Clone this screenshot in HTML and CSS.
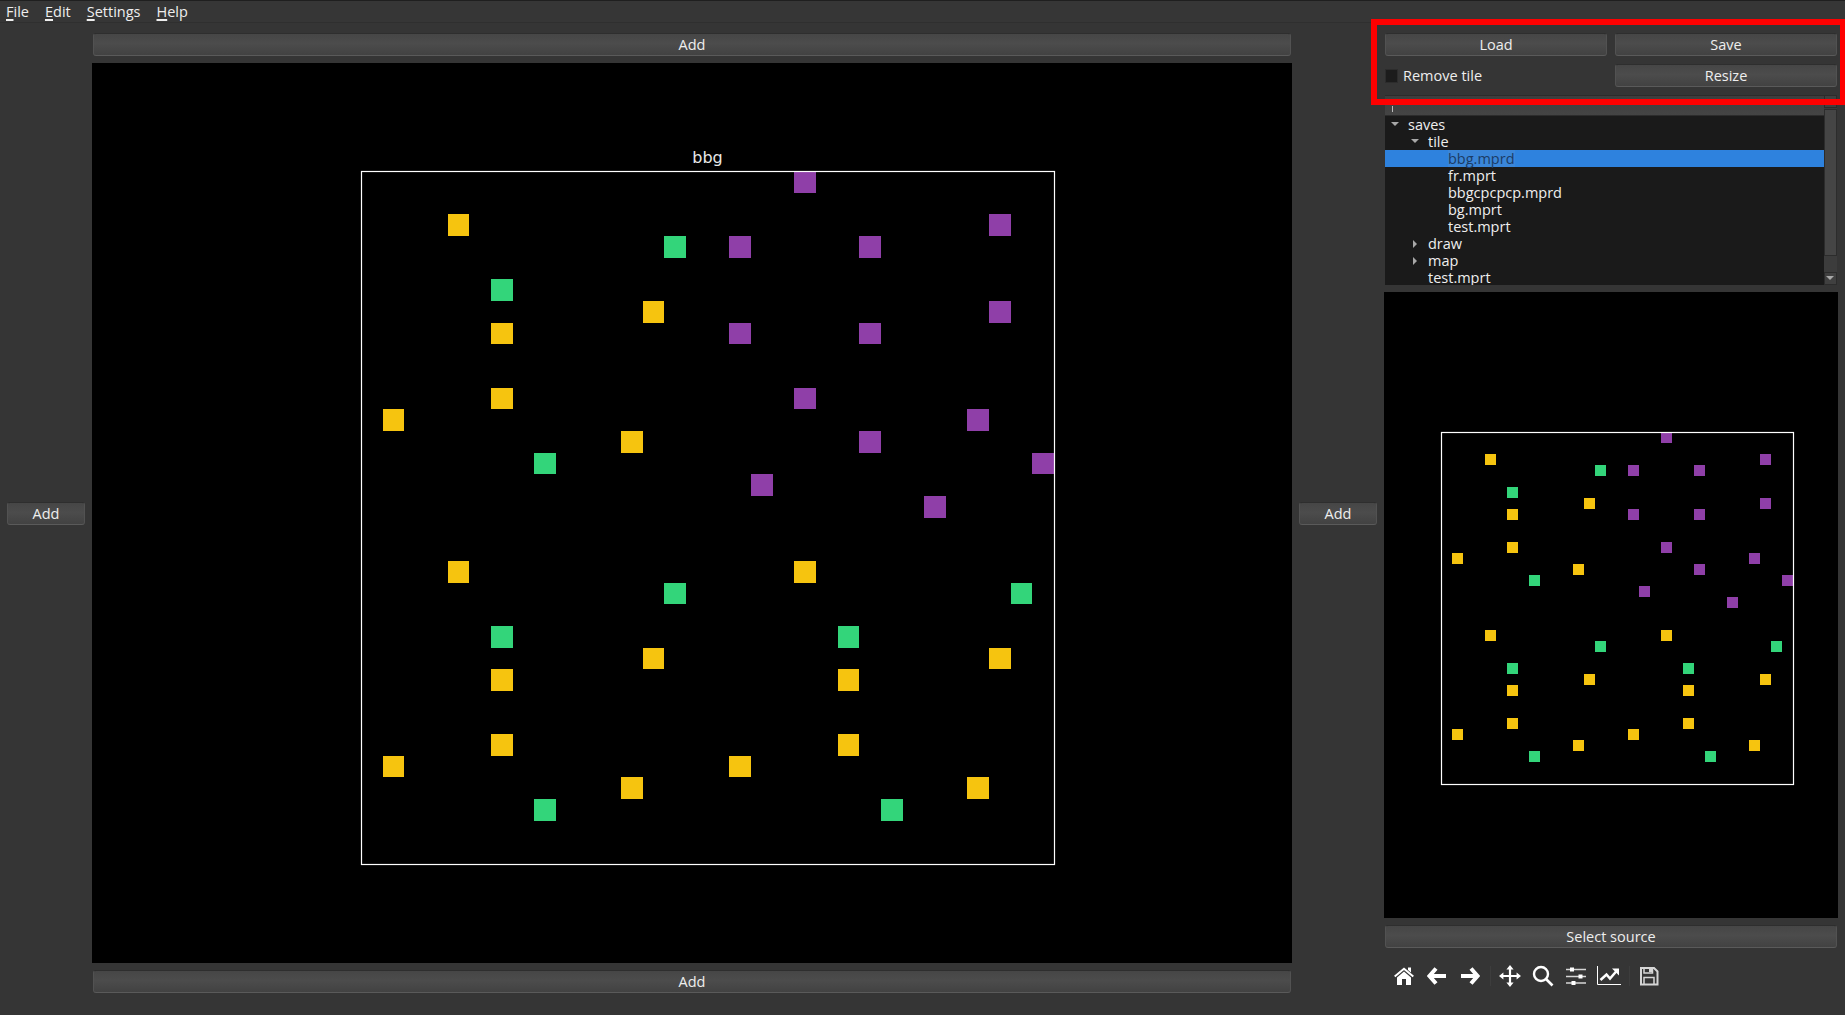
FILE: index.html
```html
<!DOCTYPE html>
<html lang="en">
<head>
  <meta charset="UTF-8">
  <title>Map editor</title>
  <link rel="stylesheet" href="styles.css">
</head>
<body>
  <div class="menubar">
    <span class="menu-item"><u>F</u>ile</span>
    <span class="menu-item"><u>E</u>dit</span>
    <span class="menu-item"><u>S</u>ettings</span>
    <span class="menu-item"><u>H</u>elp</span>
  </div>

  <div class="workspace">
    <button class="btn add-top">Add</button>
    <button class="btn add-left">Add</button>

    <!-- Main plot -->
    <svg class="canvas canvas-main" viewBox="0 0 1200 900">
      <defs>
        <g id="tiles" shape-rendering="crispEdges">
          <g class="tile-yellow">
            <rect x="4" y="2" width="1" height="1"/>
            <rect x="13" y="6" width="1" height="1"/>
            <rect x="6" y="7" width="1" height="1"/>
            <rect x="6" y="10" width="1" height="1"/>
            <rect x="1" y="11" width="1" height="1"/>
            <rect x="12" y="12" width="1" height="1"/>
            <rect x="4" y="18" width="1" height="1"/>
            <rect x="20" y="18" width="1" height="1"/>
            <rect x="13" y="22" width="1" height="1"/>
            <rect x="29" y="22" width="1" height="1"/>
            <rect x="6" y="23" width="1" height="1"/>
            <rect x="22" y="23" width="1" height="1"/>
            <rect x="6" y="26" width="1" height="1"/>
            <rect x="22" y="26" width="1" height="1"/>
            <rect x="1" y="27" width="1" height="1"/>
            <rect x="17" y="27" width="1" height="1"/>
            <rect x="12" y="28" width="1" height="1"/>
            <rect x="28" y="28" width="1" height="1"/>
          </g>
          <g class="tile-green">
            <rect x="14" y="3" width="1" height="1"/>
            <rect x="6" y="5" width="1" height="1"/>
            <rect x="8" y="13" width="1" height="1"/>
            <rect x="14" y="19" width="1" height="1"/>
            <rect x="30" y="19" width="1" height="1"/>
            <rect x="6" y="21" width="1" height="1"/>
            <rect x="22" y="21" width="1" height="1"/>
            <rect x="8" y="29" width="1" height="1"/>
            <rect x="24" y="29" width="1" height="1"/>
          </g>
          <g class="tile-purple">
            <rect x="20" y="0" width="1" height="1"/>
            <rect x="29" y="2" width="1" height="1"/>
            <rect x="17" y="3" width="1" height="1"/>
            <rect x="23" y="3" width="1" height="1"/>
            <rect x="29" y="6" width="1" height="1"/>
            <rect x="17" y="7" width="1" height="1"/>
            <rect x="23" y="7" width="1" height="1"/>
            <rect x="20" y="10" width="1" height="1"/>
            <rect x="28" y="11" width="1" height="1"/>
            <rect x="23" y="12" width="1" height="1"/>
            <rect x="31" y="13" width="1" height="1"/>
            <rect x="18" y="14" width="1" height="1"/>
            <rect x="26" y="15" width="1" height="1"/>
          </g>
        </g>
      </defs>
      <text class="plot-title" x="615.5" y="100">bbg</text>
      <use href="#tiles" transform="translate(269 108) scale(21.66)"/>
      <rect class="plot-frame" x="269.5" y="108.5" width="693" height="693"/>
    </svg>

    <button class="btn add-right">Add</button>
    <button class="btn add-bottom">Add</button>

    <div class="side-panel">
      <div class="controls">
        <button class="btn">Load</button>
        <button class="btn">Save</button>
        <label class="check"><span class="check-box"></span>Remove tile</label>
        <button class="btn">Resize</button>
      </div>

      <div class="tree">
        <div class="tree-main">
          <div class="tree-header"><span class="sort-mark"></span></div>
          <div class="tree-rows">
            <div class="row depth-0"><span class="caret caret-open"></span>saves</div>
            <div class="row depth-1"><span class="caret caret-open"></span>tile</div>
            <div class="row depth-2 selected"><span class="sel-name">bbg.mprd</span></div>
            <div class="row depth-2">fr.mprt</div>
            <div class="row depth-2">bbgcpcpcp.mprd</div>
            <div class="row depth-2">bg.mprt</div>
            <div class="row depth-2">test.mprt</div>
            <div class="row depth-1"><span class="caret caret-closed"></span>draw</div>
            <div class="row depth-1"><span class="caret caret-closed"></span>map</div>
            <div class="row depth-1">test.mprt</div>
          </div>
        </div>
        <div class="scrollbar">
          <div class="scroll-btn"></div>
          <div class="scroll-thumb"></div>
          <div class="scroll-groove"></div>
          <div class="scroll-btn"><span class="caret caret-open"></span></div>
        </div>
      </div>

      <!-- Preview plot -->
      <svg class="canvas canvas-preview" viewBox="0 0 454 626">
        <use href="#tiles" transform="translate(57 140) scale(11)"/>
        <rect class="plot-frame" x="57.5" y="140.5" width="352" height="352"/>
      </svg>

      <button class="btn select-source">Select source</button>

      <div class="toolbar">
        <span class="tool">
          <svg width="20" height="20" viewBox="0 0 20 20">
            <path class="ico-fill" d="M3 11.500 10 5.600l7 5.900V19h-5v-6H8v6H3z"/>
            <path class="ico-line" d="M.7 10.600 10 2.700l9.300 7.900" stroke-width="2"/>
            <path class="ico-fill" d="M14 1.500h3v5l-3-2.500z"/>
          </svg>
        </span>
        <span class="tool">
          <svg width="20" height="20" viewBox="0 0 20 20">
            <path class="ico-line" d="M9 2.500 2.500 10 9 17.500M3 10h16" stroke-width="4"/>
          </svg>
        </span>
        <span class="tool">
          <svg width="20" height="20" viewBox="0 0 20 20">
            <path class="ico-line" d="M11 2.500 17.500 10 11 17.500M17 10H1" stroke-width="4"/>
          </svg>
        </span>
        <span class="tool-sep"></span>
        <span class="tool">
          <svg width="22" height="22" viewBox="0 0 22 22">
            <path class="ico-line" d="M11 3v16M3 11h16" stroke-width="2.200"/>
            <path class="ico-fill" d="M11 0l3.600 4.400H7.400zM11 22l3.600-4.400H7.400zM0 11l4.400-3.600v7.200zM22 11l-4.400-3.600v7.200z"/>
          </svg>
        </span>
        <span class="tool">
          <svg width="22" height="22" viewBox="0 0 22 22">
            <circle class="ico-line" cx="9" cy="9" r="7" stroke-width="2.400"/>
            <path class="ico-line" d="M14 14l6.500 6.500" stroke-width="2.600"/>
          </svg>
        </span>
        <span class="tool">
          <svg width="20" height="20" viewBox="0 0 20 20">
            <path class="ico-dim" d="M0 3.500h20M0 10.500h20M0 17h20" stroke-width="1.500"/>
            <path class="ico-fill" d="M4 1.500h4v4H4zM12.500 8.500h4v4h-4zM5.500 15h4v4h-4z"/>
          </svg>
        </span>
        <span class="tool">
          <svg width="24" height="20" viewBox="0 0 24 20">
            <path class="ico-line" d="M.5 0v18.500H24" stroke-width="1"/>
            <path class="ico-line" d="M3.500 14l6-5.500 3.500 4 7-8" stroke-width="2.500"/>
            <path class="ico-fill" d="M15 2.500h7v7z"/>
          </svg>
        </span>
        <span class="tool-sep"></span>
        <span class="tool">
          <svg width="20" height="20" viewBox="0 0 20 20">
            <path class="ico-dim" d="M2 2h13l3.500 3.500V18.500H2z" stroke-width="2"/>
            <path class="ico-dim" d="M5 2v5h8.500V2M5 18.500v-7h10v7" stroke-width="1.500"/>
            <path class="ico-soft" d="M10 3h3v3h-3z"/>
          </svg>
        </span>
      </div>
    </div>
  </div>

  <div class="highlight"></div>
</body>
</html>
```

FILE: styles.css
```css
* {
  box-sizing: border-box;
}
html, body {
  height: 100%;
}
body {
  margin: 0;
  overflow: hidden;
  position: relative;
  background: #353535;
  color: #eeeeee;
  font-family: "Open Sans", "Noto Sans", sans-serif;
  font-size: 14.5px;
}

/* Menu bar */
.menubar {
  display: flex;
  height: 23px;
  padding-left: 6px;
  background: #363636;
  border-top: 1px solid #1f1f1f;
  border-bottom: 1px solid #2f2f2f;
  line-height: 22px;
}
.menu-item {
  margin-right: 16px;
}
.menu-item u {
  text-underline-offset: 2px;
  text-decoration-thickness: 2px;
}

/* Main layout */
.workspace {
  display: grid;
  grid-template-columns: 92px 1200px 92px 454px;
  grid-template-rows: 23px 900px 23px;
  row-gap: 7px;
  padding-top: 10px;
}
.btn {
  display: block;
  padding: 0;
  height: 23px;
  font: inherit;
  color: #eeeeee;
  background: linear-gradient(#464646, #4c4c4c 45%, #424242);
  border: 1px solid #525252;
  border-top-color: #2e2e2e;
  border-bottom-color: #5a5a5a;
  border-radius: 3px;
}
.add-top {
  grid-column: 2;
  grid-row: 1;
  margin: 0 1px;
}
.add-left {
  grid-column: 1;
  grid-row: 2;
  align-self: center;
  margin: 0 7px;
}
.canvas {
  display: block;
  background: #000;
}
.canvas-main {
  grid-column: 2;
  grid-row: 2;
  width: 1200px;
  height: 900px;
}
.add-right {
  grid-column: 3;
  grid-row: 2;
  align-self: center;
  margin: 0 7px;
}
.add-bottom {
  grid-column: 2;
  grid-row: 3;
  margin: 0 1px;
}

/* Plots */
.plot-title {
  fill: #e8e8e8;
  font-family: "DejaVu Sans", sans-serif;
  font-size: 16px;
  text-anchor: middle;
}
.plot-frame {
  fill: none;
  stroke: #ffffff;
  stroke-width: 1.2;
}
.tile-yellow {
  fill: #f6c40f;
}
.tile-green {
  fill: #33d57a;
}
.tile-purple {
  fill: #8f3fa8;
}

/* Right panel */
.side-panel {
  grid-column: 4;
  grid-row: 1 / span 3;
  display: flex;
  flex-direction: column;
  height: 982px;
}
.controls {
  display: grid;
  grid-template-columns: 222px 222px;
  column-gap: 8px;
  row-gap: 8px;
  margin: 0 1px;
}
.check {
  display: flex;
  align-items: center;
  gap: 5px;
}
.check-box {
  width: 13px;
  height: 14px;
  background: #1c1c1c;
  border: 1px solid #2c2c2c;
}

/* File tree */
.tree {
  display: flex;
  height: 190px;
  margin: 8px 1px 0;
}
.tree-main {
  width: 439px;
  background: #1a1a1a;
  overflow: hidden;
}
.tree-header {
  position: relative;
  height: 21px;
  background: linear-gradient(#3e3e3e, #444444);
  border-top: 1px solid #2c2c2c;
  border-bottom: 1px solid #2c2c2c;
}
.sort-mark {
  position: absolute;
  left: 7px;
  top: 10px;
  width: 1px;
  height: 6px;
  background: #bbbbbb;
}
.row {
  position: relative;
  height: 17px;
  line-height: 18px;
  white-space: nowrap;
}
.depth-0 {
  padding-left: 23px;
}
.depth-1 {
  padding-left: 43px;
}
.depth-2 {
  padding-left: 63px;
}
.selected {
  background: #2e82de;
  color: #1c3c66;
}
.sel-name {
  display: inline-block;
  height: 17px;
  background: #3a86d9;
}
.caret {
  position: absolute;
  width: 0;
  height: 0;
}
.caret-open {
  margin-left: -17px;
  margin-top: 6px;
  border-left: 4px solid transparent;
  border-right: 4px solid transparent;
  border-top: 4px solid #a8a8a8;
}
.caret-closed {
  margin-left: -15px;
  margin-top: 5px;
  border-top: 4px solid transparent;
  border-bottom: 4px solid transparent;
  border-left: 4px solid #a8a8a8;
}

/* Tree scrollbar */
.scrollbar {
  display: flex;
  flex-direction: column;
  width: 13px;
  background: #3c3c3c;
}
.scroll-btn {
  position: relative;
  height: 13px;
  background: #404040;
  border: 1px solid #2c2c2c;
}
.scroll-btn .caret-open {
  margin: 3px 0 0 1px;
}
.scroll-thumb {
  height: 147px;
  margin-top: 1px;
  background: #454545;
  border: 1px solid #2c2c2c;
}
.scroll-groove {
  flex: 1;
}

.canvas-preview {
  width: 454px;
  height: 626px;
  margin-top: 7px;
}
.select-source {
  flex: none;
  margin: 7px 1px 0;
}

/* Plot toolbar */
.toolbar {
  display: flex;
  align-items: center;
  height: 56px;
  padding-left: 3.5px;
}
.tool {
  display: flex;
  justify-content: center;
  width: 33px;
}
.tool-sep {
  width: 1px;
  height: 20px;
  margin: 0 3px;
  background: #3d3d3d;
}
.ico-fill {
  fill: #ffffff;
}
.ico-line {
  fill: none;
  stroke: #ffffff;
}
.ico-dim {
  fill: none;
  stroke: #d6d6d6;
}
.ico-soft {
  fill: #d6d6d6;
}

/* Red annotation drawn over the screenshot */
.highlight {
  position: absolute;
  left: 1371px;
  top: 19px;
  right: -1px;
  height: 86px;
  border: 6px solid #fe0000;
}
```
